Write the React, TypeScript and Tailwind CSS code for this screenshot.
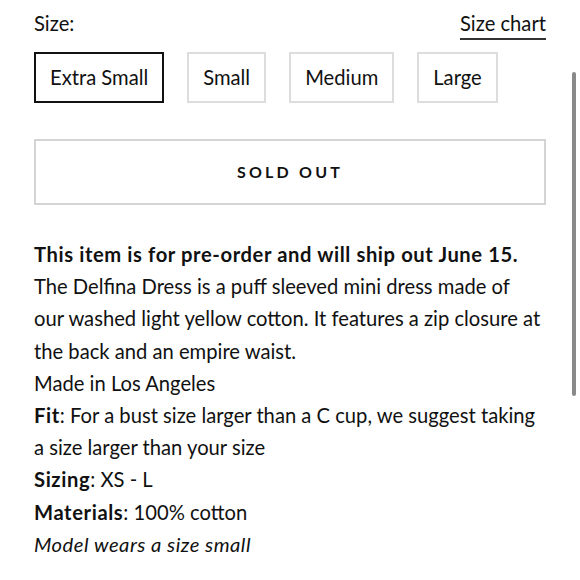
import React from "react";

const sizes = ["Extra Small", "Small", "Medium", "Large"];

const App: React.FC = () => {
  return (
    <div className="relative w-[580px] h-[580px] bg-white overflow-hidden text-[#111] font-['Lato',sans-serif]">
      <div className="w-[512px] ml-[34px] pt-[9px]">
        <div className="flex justify-between items-start text-[20.2px] leading-[28px]">
          <span>Size:</span>
          <span className="border-b-2 border-[#333] leading-[29px]">Size chart</span>
        </div>

        <div className="flex gap-[23px] mt-[12px]">
          {sizes.map((s, i) => (
            <div
              key={s}
              className={`h-[51px] px-[14px] flex items-center text-[20.2px] ${
                i === 0 ? "border-2 border-[#111]" : "border-2 border-[#ddd]"
              }`}
            >
              {s}
            </div>
          ))}
        </div>

        <div className="mt-[36px] h-[66px] border-2 border-[#d4d4d4] flex items-center justify-center">
          <span className="text-[16px] font-bold tracking-[0.2em]">SOLD OUT</span>
        </div>

        <div className="mt-[33px] text-[20.2px] leading-[32.2px] whitespace-nowrap">
          <p className="font-bold tracking-[0.6px]">
            This item is for pre-order and will ship out June 15.
          </p>
          <p>
            <span className="block">The Delfina Dress is a puff sleeved mini dress made of</span>
            <span className="block">our washed light yellow cotton. It features a zip closure at</span>
            <span className="block">the back and an empire waist.</span>
          </p>
          <p>Made in Los Angeles</p>
          <p>
            <span className="block">
              <b className="tracking-[0.6px]">Fit</b>: For a bust size larger than a C cup, we
              suggest taking
            </span>
            <span className="block">a size larger than your size</span>
          </p>
          <p>
            <b className="tracking-[0.6px]">Sizing</b>: XS - L
          </p>
          <p>
            <b className="tracking-[0.6px]">Materials</b>: 100% cotton
          </p>
          <p className="italic tracking-[0.5px]">Model wears a size small</p>
        </div>
      </div>

      <div className="absolute left-[572px] top-[72px] w-[4px] h-[324px] bg-[#8a8a8a] rounded-sm" />
    </div>
  );
};

export default App;
